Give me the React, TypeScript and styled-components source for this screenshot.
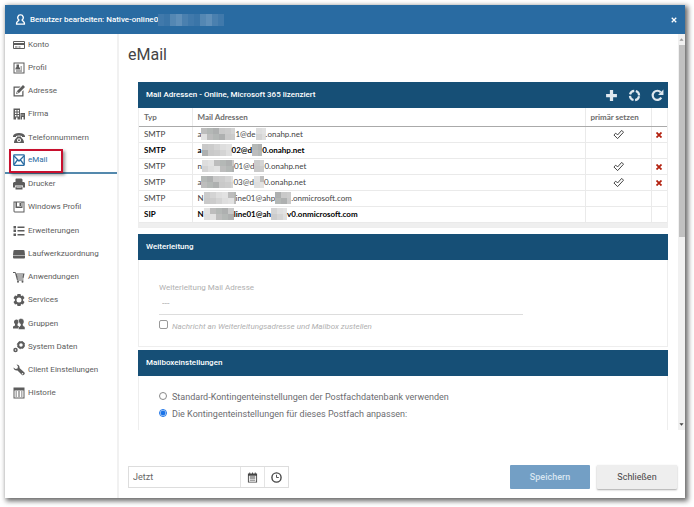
import React from "react";
import styled, { createGlobalStyle } from "styled-components";

const Global = createGlobalStyle`
  *, *::before, *::after { box-sizing: border-box; }
  html, body, #root { height: 100%; }
  body { margin: 0; background: #fff; font-family: Roboto, sans-serif; font-size: 9px; color: #666; }
  button, input { font: inherit; color: inherit; }
`;

const Page = styled.div`
  height: 100%;
  padding: 5px 9px 9px 5px;
`;
const Dialog = styled.div`
  height: 100%;
  display: flex;
  flex-direction: column;
  background: #fff;
  box-shadow: 2px 2px 5px 1px rgba(0, 0, 0, 0.6);
`;
const TitleBar = styled.header`
  flex: none;
  height: 29px;
  padding: 0 8px 0 10px;
  display: flex;
  align-items: center;
  background: #296ba2;
  color: #fff;
`;
const Title = styled.h1`
  flex: 1;
  margin: 0 0 0 4px;
  display: flex;
  align-items: center;
  font-size: 8px;
  line-height: 12px;
  font-weight: 500;
`;
const IconButton = styled.button<{ $size?: number }>`
  width: ${(p) => p.$size ?? 14}px;
  height: ${(p) => p.$size ?? 14}px;
  padding: 0;
  border: 0;
  background: none;
  color: inherit;
  display: inline-flex;
  align-items: center;
  justify-content: center;
  vertical-align: middle;
`;
const Body = styled.div`
  flex: 1;
  min-height: 0;
  display: flex;
`;
const Sidebar = styled.nav`
  flex: none;
  width: 114px;
  border-right: 2px solid #f1f1f1;
`;
const NavList = styled.ul`
  margin: 0;
  padding: 0;
  list-style: none;
  min-height: 372px;
  display: grid;
  grid-auto-rows: 1fr;
`;
const NavItem = styled.li<{ $active?: boolean }>`
  display: flex;
  position: relative;
  color: ${(p) => (p.$active ? "#296ba2" : "#5c5c5c")};
  border-bottom: ${(p) => (p.$active ? "2px solid #5489ad" : "0")};
`;
const NavLink = styled.a`
  flex: 1;
  display: flex;
  align-items: center;
  gap: 3px;
  padding: 0 0 2px 8px;
  font-size: 8px;
  line-height: 12px;
  color: inherit;
  text-decoration: none;
  white-space: nowrap;
`;
const Marker = styled.span`
  position: absolute;
  left: 4px;
  top: -1px;
  width: 54px;
  height: 24px;
  border: 2px solid #c8102e;
  box-shadow: 2px 2px 3px rgba(0, 0, 0, 0.4);
`;
const Main = styled.main`
  flex: 1;
  min-width: 0;
  display: flex;
  flex-direction: column;
`;
const ScrollArea = styled.div`
  flex: 1;
  min-height: 0;
  display: flex;
`;
const Content = styled.div`
  flex: 1;
  min-width: 0;
  padding: 10px 10px 0 9px;
  overflow: hidden;
`;
const Heading = styled.h2`
  margin: 0 0 16px;
  font-size: 16px;
  line-height: 22px;
  font-weight: 400;
  color: #444;
`;
const Panels = styled.div`
  margin-left: 10px;
  display: grid;
`;
const Panel = styled.section<{ $gap?: number }>`
  border: 1px solid #eee;
  border-top: 0;
  margin-bottom: ${(p) => p.$gap ?? 0}px;
`;
const PanelBar = styled.div`
  height: 26px;
  margin: 0 -1px;
  padding: 0 4px 0 8px;
  display: flex;
  align-items: center;
  justify-content: space-between;
  background: #164f76;
  color: #fff;
`;
const PanelTitle = styled.h3`
  margin: 0;
  font-size: 8px;
  line-height: 12px;
  font-weight: 500;
`;
const BarActions = styled.div`
  display: flex;
  gap: 9px;
  color: #dfe8ef;
`;
const Table = styled.table`
  width: 100%;
  border-collapse: collapse;
  table-layout: fixed;
  font-family: Lato, sans-serif;
  font-size: 8px;
  line-height: 15px;
  color: #555;
`;
const HeadCell = styled.th<{ $width?: number }>`
  width: ${(p) => (p.$width ? `${p.$width}px` : "auto")};
  height: 18px;
  padding: 2px 5px 0;
  text-align: left;
  font-weight: 700;
  color: #6c6c6c;
  white-space: nowrap;
  border-bottom: 1px solid #aaa;
  & + & { border-left: 1px solid #eaeaea; }
`;
const Row = styled.tr<{ $strong?: boolean }>`
  font-weight: ${(p) => (p.$strong ? 700 : 400)};
  color: ${(p) => (p.$strong ? "#000" : "#444")};
`;
const Cell = styled.td<{ $center?: boolean }>`
  height: 16px;
  padding: 0 ${(p) => (p.$center ? 0 : 5)}px;
  text-align: ${(p) => (p.$center ? "center" : "left")};
  line-height: 12px;
  border-bottom: 1px solid #eaeaea;
  & + & { border-left: 1px solid #eaeaea; }
`;
const Address = styled.span`
  display: flex;
  align-items: center;
`;
const TableFoot = styled.div`
  height: 4px;
  background: #efefef;
`;
const ForwardForm = styled.div`
  padding: 21px 144px 12px 20px;
  color: #b0b0b0;
`;
const FieldLabel = styled.label`
  display: block;
  line-height: 14px;
  font-size: 8px;
`;
const LineInput = styled.input`
  display: block;
  width: 100%;
  height: 20px;
  padding: 0 3px 2px;
  border: 0;
  border-bottom: 1px solid #ddd;
  font-size: 9px;
  outline: none;
`;
const CheckLabel = styled.label`
  display: flex;
  align-items: center;
  gap: 4px;
  margin-top: 5px;
  font-size: 8px;
  line-height: 14px;
  font-style: italic;
`;
const Check = styled.input`
  appearance: none;
  width: 9px;
  height: 9px;
  margin: 0 0 4px;
  border: 1px solid #999;
  border-radius: 2px;
`;
const Options = styled.div`
  padding: 13px 20px 40px;
  display: grid;
`;
const RadioLabel = styled.label`
  display: flex;
  align-items: center;
  gap: 5px;
  font-size: 9px;
  line-height: 17px;
  color: #6c6c70;
`;
const Radio = styled.input`
  appearance: none;
  width: 8px;
  height: 8px;
  margin: 0 0 3px;
  border: 1px solid #888;
  border-radius: 50%;
  &:checked {
    border-color: #1a73e8;
    background: radial-gradient(circle, #1a73e8 0 2px, #fff 3px);
  }
`;
const ScrollTrack = styled.div`
  flex: none;
  width: 7px;
  display: flex;
  flex-direction: column;
  align-items: center;
  justify-content: space-between;
  background: #f1f1f1;
  padding: 3px 0;
`;
const Thumb = styled.div`
  width: 6px;
  height: 192px;
  margin: 3px 0 auto;
  background: #c1c1c1;
`;
const Footer = styled.footer`
  flex: none;
  padding: 35px 8px 9px 9px;
  display: flex;
  align-items: center;
  justify-content: space-between;
`;
const DateGroup = styled.div`
  display: flex;
  height: 22px;
  border: 1px solid #ddd;
`;
const DateInput = styled.input`
  width: 111px;
  padding: 0 4px;
  border: 0;
  font-size: 9px;
  outline: none;
`;
const DateButton = styled.button`
  width: 24px;
  padding: 0;
  border: 0;
  border-left: 1px solid #e4e4e4;
  background: #fff;
  color: #444;
  display: flex;
  align-items: center;
  justify-content: center;
`;
const Actions = styled.div`
  display: flex;
  gap: 7px;
`;
const ActionButton = styled.button<{ $primary?: boolean }>`
  width: 80px;
  height: 24px;
  padding: 0;
  border: 0;
  border-radius: 1px;
  font-size: 9px;
  font-weight: ${(p) => (p.$primary ? 500 : 400)};
  color: ${(p) => (p.$primary ? "#d7e5f1" : "#444")};
  background: ${(p) => (p.$primary ? "#739fc5" : "#eee")};
  box-shadow: ${(p) => (p.$primary ? "none" : "0 1px 2px rgba(0, 0, 0, 0.35)")};
`;
const Svg = styled.svg<{ $size: number }>`
  flex: none;
  display: block;
  width: ${(p) => p.$size}px;
  height: ${(p) => p.$size}px;
`;
const MaskSvg = styled.svg`
  flex: none;
  display: block;
`;

const Glyph = ({ size = 12, box = 24, children }: { size?: number; box?: number; children: React.ReactNode }) => (
  <Svg $size={size} viewBox={`0 0 ${box} ${box}`} fill="currentColor" aria-hidden="true">{children}</Svg>
);

const shades = ["#d4d4d4", "#bdbdbd", "#c9c9c9", "#dedede", "#b4b8b6", "#cccccc", "#e2e2e2", "#aeb0b0"];
const Mask = ({ width, height = 12, seed = 0, colors = shades }: { width: number; height?: number; seed?: number; colors?: string[] }) => {
  const tiles = [];
  for (let y = 0; y < height; y += 6)
    for (let x = 0; x < width; x += 6)
      tiles.push(
        <rect key={`${x}-${y}`} x={x} y={y} width={6} height={6} fill={colors[(x / 6 * 3 + y / 6 * 5 + seed) % colors.length]} />
      );
  return <MaskSvg width={width} height={height} aria-hidden="true">{tiles}</MaskSvg>;
};

const icons = {
  card: <path fillRule="evenodd" d="M2 4h20a2 2 0 0 1 2 2v12a2 2 0 0 1-2 2H2a2 2 0 0 1-2-2V6a2 2 0 0 1 2-2zm0 2v2h20V6zm0 6v6h20v-6zm2 3h5v2H4zm7 0h4v2h-4z" />,
  profile: <path fillRule="evenodd" d="M1 1h22v22H1zm2 2v18h18V3zm4 2h5v5l2 2v3H5v-3l2-2zm8 4h3v2h-3zm0 4h3v2h-3zM6 17h12v2H6z" />,
  edit: (
    <>
      <path d="M1 3h14l-2.500 2.500H3.500v15h15V13L21 10.500V23H1z" />
      <path d="M20 0l4 4-12 12-6 2 2-6zM9 13l-1 3 3-1z" fillRule="evenodd" />
    </>
  ),
  company: <path fillRule="evenodd" d="M1 1h13v22H9v-4H6v4H1zm3 3v3h3V4zm5 0v3h3V4zM4 9v3h3V9zm5 0v3h3V9zm-5 5v3h3v-3zm5 0v3h3v-3zm6-4h9v13h-3v-5h-3v5h-3zm2 3v2h2v-2zm4 0v2h1v-2z" />,
  phone: <path fillRule="evenodd" d="M12 2c6 0 11 2 12 6v2h-6V8c-3-1.500-9-1.500-12 0v2H0V8c1-4 6-6 12-6zM8 9h8l1 3c3 2 5 5 5 10H2c0-5 2-8 5-10zm4 3.500a4 4 0 1 0 0 8 4 4 0 0 0 0-8zm0 2a2 2 0 1 1 0 4 2 2 0 0 1 0-4z" />,
  mail: (
    <g fill="none" stroke="currentColor" strokeWidth="2.500">
      <rect x="1.500" y="1.500" width="21" height="21" rx="1" />
      <path d="M2 4l10 10L22 4M2 21l7-9M22 21l-7-9" />
    </g>
  ),
  printer: <path fillRule="evenodd" d="M6 1h11l2 2v5H5V2zM2 8h20l2 2v9h-4v-4H4v4H0v-9zm3 9h14v6H5zm2 2v1h10v-1z" />,
  floppy: <path fillRule="evenodd" d="M1 1h22v22H3l-2-2zm2 2v18h18V3h-2v11H5V3zm5 0h9v8H8zm5 1v6h3V4z" />,
  list: <path d="M1 2h5v5H1zm8 1h14v3H9zM1 9h5v5H1zm8 1h14v3H9zM1 17h5v5H1zm8 1h14v3H9z" />,
  drive: <path d="M3 4h18l2 1 1 9H0l1-9zM0 15h24v4l-1 2H1l-1-2z" />,
  cart: <path d="M0 2h5l1 3h17l-2 10H9l.5 2H21v2H8L4 4H0zm7.500 5l.5 2h12V7zm1 4l.5 2h10.500V11zM10 19.500a2 2 0 1 1 0 4 2 2 0 0 1 0-4zm9 0a2 2 0 1 1 0 4 2 2 0 0 1 0-4z" fillRule="evenodd" />,
  gear: <path fillRule="evenodd" d="M9 0h6l1 4 4-1 3 5-3 3v2l3 3-3 5-4-1-1 4H9l-1-4-4 1-3-5 3-3v-2L1 8l3-5 4 1zm3 7a5 5 0 1 0 0 10 5 5 0 0 0 0-10z" />,
  group: (
    <>
      <path d="M7 3c3 0 4 2 4 5 0 2-1 3-2 4v3l3 2v4H0v-4l4-2v-3c-1-1-2-2-2-4 0-3 2-5 5-5z" />
      <path d="M16 1c4 0 6 3 6 6s-1 4-2 5v3l4 3v5H11v-4l4-4v-3c-3-2-5-5-4-8 1-2 3-3 5-3z" stroke="#fff" />
    </>
  ),
  gears: (
    <g fill="none" stroke="currentColor">
      <circle cx="16" cy="8" r="5.500" strokeWidth="4" />
      <circle cx="16" cy="8" r="7.500" strokeWidth="1.500" strokeDasharray="3 2.900" />
      <circle cx="5" cy="18" r="3" strokeWidth="3" />
    </g>
  ),
  wrench: <path d="M7 1c4 0 7 3 6 7l10 9c2 3-2 7-5 5L9 13c-4 1-8-2-8-6l4 3 4-1 1-4zm12 17a1.500 1.500 0 1 0 0 3 1.500 1.500 0 0 0 0-3z" fillRule="evenodd" />,
  history: <path fillRule="evenodd" d="M1 1h22v22H1zm2 6v14h18V7zm2 2h3v2H5zm5 0h4v2h-4zm6 0h3v2h-3zM5 13h3v2H5zm5 0h4v2h-4zm6 0h3v2h-3zM5 17h3v2H5zm5 0h4v2h-4zm6 0h3v2h-3z" />,
};

const nav: { label: string; icon: keyof typeof icons; active?: boolean }[] = [
  { label: "Konto", icon: "card" },
  { label: "Profil", icon: "profile" },
  { label: "Adresse", icon: "edit" },
  { label: "Firma", icon: "company" },
  { label: "Telefonnummern", icon: "phone" },
  { label: "eMail", icon: "mail", active: true },
  { label: "Drucker", icon: "printer" },
  { label: "Windows Profil", icon: "floppy" },
  { label: "Erweiterungen", icon: "list" },
  { label: "Laufwerkzuordnung", icon: "drive" },
  { label: "Anwendungen", icon: "cart" },
  { label: "Services", icon: "gear" },
  { label: "Gruppen", icon: "group" },
  { label: "System Daten", icon: "gears" },
  { label: "Client Einstellungen", icon: "wrench" },
  { label: "Historie", icon: "history" },
];

type Part = string | number;
const rows: { type: string; parts: Part[]; strong?: boolean; actions?: boolean }[] = [
  { type: "SMTP", parts: ["a", 34, "1@de", 10, ".onahp.net"], actions: true },
  { type: "SMTP", parts: ["a", 30, "02@d", 10, "0.onahp.net"], strong: true },
  { type: "SMTP", parts: ["n", 32, "01@d", 10, "0.onahp.net"], actions: true },
  { type: "SMTP", parts: ["a", 32, "03@d", 10, "0.onahp.net"], actions: true },
  { type: "SMTP", parts: ["N", 32, "ine01@ahp", 16, ".onmicrosoft.com"] },
  { type: "SIP", parts: ["N", 30, "line01@ah", 16, "v0.onmicrosoft.com"], strong: true },
];

export default function App() {
  return (
    <>
      <Global />
      <Page>
        <Dialog role="dialog" aria-labelledby="dialog-title">
          <TitleBar>
            <Glyph size={11}>
              <path d="M12 2a5.500 6 0 0 1 3.500 11c1 3 5 3 5 7v2h-17v-2c0-4 4-4 5-7A5.500 6 0 0 1 12 2z" fill="none" stroke="#fff" strokeWidth="3" />
            </Glyph>
            <Title id="dialog-title">
              Benutzer bearbeiten: Native-online0
              <Mask width={66} height={12} colors={["#4079ab", "#5487b3", "#4a80af", "#3a75a8", "#5f8fb9"]} />
            </Title>
            <IconButton $size={6} aria-label="Dialog schließen">
              <Glyph size={6}><path d="M3 3l18 18M21 3L3 21" stroke="#fff" strokeWidth="5" /></Glyph>
            </IconButton>
          </TitleBar>
          <Body>
            <Sidebar>
              <NavList>
                {nav.map((n) => (
                  <NavItem key={n.label} $active={n.active}>
                    <NavLink href="#" aria-current={n.active ? "page" : undefined}>
                      <Glyph>{icons[n.icon]}</Glyph>
                      {n.label}
                    </NavLink>
                    {n.active && <Marker />}
                  </NavItem>
                ))}
              </NavList>
            </Sidebar>
            <Main>
              <ScrollArea>
                <Content>
                  <Heading>eMail</Heading>
                  <Panels>
                    <Panel $gap={6}>
                      <PanelBar>
                        <PanelTitle>Mail Adressen - Online, Microsoft 365 lizenziert</PanelTitle>
                        <BarActions>
                          <IconButton aria-label="Hinzufügen">
                            <Glyph size={13}><path d="M9 2h6v7h7v6h-7v7H9v-7H2V9h7z" /></Glyph>
                          </IconButton>
                          <IconButton aria-label="Synchronisieren">
                            <Glyph size={13}>
                              <circle cx="12" cy="12" r="8.500" fill="none" stroke="currentColor" strokeWidth="4" strokeDasharray="10.350 3" strokeDashoffset="-1.500" />
                            </Glyph>
                          </IconButton>
                          <IconButton aria-label="Aktualisieren">
                            <Glyph size={13}>
                              <path d="M19 16a8.500 8.500 0 1 1-1-10" fill="none" stroke="currentColor" strokeWidth="4" />
                              <path d="M23 1v10H13z" />
                            </Glyph>
                          </IconButton>
                        </BarActions>
                      </PanelBar>
                      <Table>
                        <thead>
                          <tr>
                            <HeadCell $width={53}>Typ</HeadCell>
                            <HeadCell>Mail Adressen</HeadCell>
                            <HeadCell $width={66}>primär setzen</HeadCell>
                            <HeadCell $width={16} aria-label="Löschen" />
                          </tr>
                        </thead>
                        <tbody>
                          {rows.map((r, i) => (
                            <Row key={i} $strong={r.strong}>
                              <Cell>{r.type}</Cell>
                              <Cell>
                                <Address>
                                  {r.parts.map((p, j) =>
                                    typeof p === "number" ? <Mask key={j} width={p} seed={i + j} /> : <span key={j}>{p}</span>
                                  )}
                                </Address>
                              </Cell>
                              <Cell $center>
                                {r.actions && (
                                  <IconButton $size={11} aria-label="Primär setzen">
                                    <Glyph size={11}>
                                      <path d="M2 13l4-4 4 4L19 3l4 4L10 21z" fill="#fff" stroke="#333" strokeWidth="2" />
                                    </Glyph>
                                  </IconButton>
                                )}
                              </Cell>
                              <Cell $center>
                                {r.actions && (
                                  <IconButton $size={7} aria-label="Adresse löschen">
                                    <Glyph size={6}><path d="M2 2l20 20M22 2L2 22" stroke="#b3200e" strokeWidth="7" /></Glyph>
                                  </IconButton>
                                )}
                              </Cell>
                            </Row>
                          ))}
                        </tbody>
                      </Table>
                      <TableFoot />
                    </Panel>
                    <Panel $gap={3}>
                      <PanelBar><PanelTitle>Weiterleitung</PanelTitle></PanelBar>
                      <ForwardForm>
                        <FieldLabel htmlFor="forward">Weiterleitung Mail Adresse</FieldLabel>
                        <LineInput id="forward" defaultValue="---" />
                        <CheckLabel>
                          <Check type="checkbox" />
                          Nachricht an Weiterleitungsadresse und Mailbox zustellen
                        </CheckLabel>
                      </ForwardForm>
                    </Panel>
                    <Panel>
                      <PanelBar><PanelTitle>Mailboxeinstellungen</PanelTitle></PanelBar>
                      <Options>
                        <RadioLabel>
                          <Radio type="radio" name="quota" />
                          Standard-Kontingenteinstellungen der Postfachdatenbank verwenden
                        </RadioLabel>
                        <RadioLabel>
                          <Radio type="radio" name="quota" defaultChecked />
                          Die Kontingenteinstellungen für dieses Postfach anpassen:
                        </RadioLabel>
                      </Options>
                    </Panel>
                  </Panels>
                </Content>
                <ScrollTrack aria-hidden="true">
                  <Glyph size={5}><path d="M12 6l10 12H2z" fill="#999" /></Glyph>
                  <Thumb />
                  <Glyph size={5}><path d="M12 18L2 6h20z" fill="#444" /></Glyph>
                </ScrollTrack>
              </ScrollArea>
              <Footer>
                <DateGroup>
                  <DateInput aria-label="Zeitpunkt" defaultValue="Jetzt" />
                  <DateButton aria-label="Kalender">
                    <Glyph size={11}>
                      <path fillRule="evenodd" d="M2 3h3V1h2v2h4V1h2v2h4V1h2v2h3v20H2zm2 5v13h16V8zm2 2h12v2H6zm0 4h12v2H6zm0 4h12v1H6z" />
                    </Glyph>
                  </DateButton>
                  <DateButton aria-label="Uhrzeit">
                    <Glyph size={11}>
                      <g fill="none" stroke="currentColor" strokeWidth="3"><circle cx="12" cy="12" r="10" /><path d="M12 6v6h5" strokeWidth="2" /></g>
                    </Glyph>
                  </DateButton>
                </DateGroup>
                <Actions>
                  <ActionButton $primary>Speichern</ActionButton>
                  <ActionButton>Schließen</ActionButton>
                </Actions>
              </Footer>
            </Main>
          </Body>
        </Dialog>
      </Page>
    </>
  );
}
